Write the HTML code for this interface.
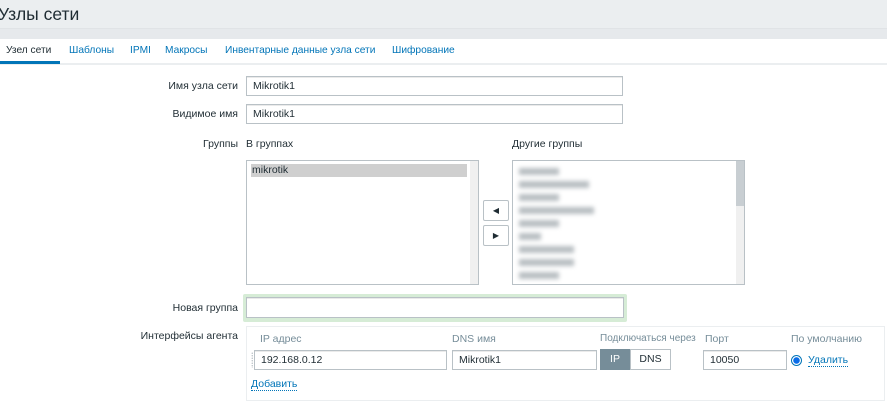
<!DOCTYPE html>
<html><head><meta charset="utf-8"><style>
*{box-sizing:border-box;margin:0;padding:0}
body{width:887px;height:413px;overflow:hidden;background:#fff;font-family:"Liberation Sans",Arial,sans-serif;font-size:10.5px;color:#1f2c33;position:relative}
.a{position:absolute;white-space:nowrap}
.hdr{left:0;top:0;width:887px;height:38px;background:#ebeef0}
.hdr2{left:0;top:28px;width:887px;height:11px;background:#e6e9ec;border-top:1px solid #e0e3e6}
.title{left:-2px;top:4px;font-size:17.5px;color:#1f2c33}
.tabs{left:0;top:39px;width:887px;height:26px;border-bottom:2px solid #ebeef0;background:#fff}
.tab{top:45px;color:#0275b8;font-size:10.2px}
.inp{border:1px solid #b9c1c6;background:#fff;height:20px;padding:3px 6px;box-shadow:inset 0 1px 0 #eaeaea}
.lbl{text-align:right;width:238px;left:0}
.list{border:1px solid #b9c1c6;background:#fff}
.btn{border:1px solid #b9c1c6;background:#fff;border-radius:2px;width:26px;height:21px;text-align:center;line-height:19px;font-size:8px}
.gh{color:#768d99}
.blur{position:absolute;height:7px;background:#8a949a;filter:blur(2px);opacity:.6}
</style></head><body>
<div class="a hdr"></div><div class="a hdr2"></div>
<div class="a title">Узлы сети</div>
<div class="a tabs"></div>
<div class="a tab" style="left:6px;color:#1f2c33">Узел сети</div>
<div class="a" style="left:0;top:61px;width:60px;height:3px;background:#0275b8"></div>
<div class="a tab" style="left:69px">Шаблоны</div>
<div class="a tab" style="left:130px">IPMI</div>
<div class="a tab" style="left:165px">Макросы</div>
<div class="a tab" style="left:225px">Инвентарные данные узла сети</div>
<div class="a tab" style="left:392px">Шифрование</div>

<div class="a lbl" style="top:80px">Имя узла сети</div>
<div class="a inp" style="left:246px;top:76px;width:377px">Mikrotik1</div>
<div class="a lbl" style="top:108px">Видимое имя</div>
<div class="a inp" style="left:246px;top:104px;width:377px">Mikrotik1</div>

<div class="a lbl" style="top:138px">Группы</div>
<div class="a" style="left:246px;top:138px">В группах</div>
<div class="a" style="left:512px;top:138px">Другие группы</div>
<div class="a list" style="left:246px;top:160px;width:233px;height:125px">
 <div style="position:absolute;left:4px;top:3px;width:216px;height:13px;background:#cfcfcf;padding-left:1px;line-height:13px">mikrotik</div>
 <div style="position:absolute;right:0;top:0;width:8px;height:100%;background:#f0f0f0"></div>
</div>
<div class="a btn" style="left:483px;top:200px">&#9664;</div>
<div class="a btn" style="left:483px;top:225px">&#9654;</div>
<div class="a list" style="left:512px;top:160px;width:233px;height:125px;overflow:hidden">
 <div style="position:absolute;right:0;top:0;width:8px;height:100%;background:#f0f0f0"></div>
 <div style="position:absolute;right:0;top:0;width:8px;height:45px;background:#c8ced2"></div>
 <div class="blur" style="left:6px;top:7px;width:40px"></div>
 <div class="blur" style="left:6px;top:20px;width:70px"></div>
 <div class="blur" style="left:6px;top:33px;width:40px"></div>
 <div class="blur" style="left:6px;top:46px;width:75px"></div>
 <div class="blur" style="left:6px;top:59px;width:40px"></div>
 <div class="blur" style="left:6px;top:72px;width:22px"></div>
 <div class="blur" style="left:6px;top:85px;width:55px"></div>
 <div class="blur" style="left:6px;top:98px;width:55px"></div>
 <div class="blur" style="left:6px;top:111px;width:40px"></div>
</div>

<div class="a lbl" style="top:302px">Новая группа</div>
<div class="a" style="left:243px;top:294px;width:384px;height:28px;background:#d6ecd6;border-radius:2px"></div>
<div class="a inp" style="left:246px;top:297px;width:378px;height:21px"></div>

<div class="a lbl" style="top:330px">Интерфейсы агента</div>
<div class="a" style="left:246px;top:326px;width:639px;height:75px;border:1px solid #ebeef0"></div>
<div class="a gh" style="left:260px;top:333px">IP адрес</div>
<div class="a gh" style="left:452px;top:333px">DNS имя</div>
<div class="a gh" style="left:600px;top:333px;font-size:10px">Подключаться через</div>
<div class="a gh" style="left:705px;top:333px">Порт</div>
<div class="a gh" style="left:791px;top:333px">По умолчанию</div>
<div class="a" style="left:251px;top:352px;width:5px;height:16px;background-image:radial-gradient(#b9c1c6 0.6px,transparent 0.8px);background-size:2.5px 2.5px"></div>
<div class="a inp" style="left:254px;top:350px;width:193px">192.168.0.12</div>
<div class="a inp" style="left:452px;top:350px;width:145px">Mikrotik1</div>
<div class="a" style="left:600px;top:349px;width:30px;height:21px;background:#768d99;color:#fff;text-align:center;line-height:21px">IP</div>
<div class="a" style="left:630px;top:349px;width:41px;height:21px;border:1px solid #b9c1c6;text-align:center;line-height:19px">DNS</div>
<div class="a inp" style="left:703px;top:350px;width:84px">10050</div>
<div class="a" style="left:791px;top:355px;width:11px;height:11px;border-radius:50%;border:1px solid #0275b8;background:radial-gradient(#0a6ce8 3px,#fff 3.5px)"></div>
<div class="a" style="left:808px;top:354px;color:#0275b8;border-bottom:1px dotted #0275b8">Удалить</div>
<div class="a" style="left:251px;top:378px;color:#0275b8;border-bottom:1px dotted #0275b8">Добавить</div>
</body></html>
